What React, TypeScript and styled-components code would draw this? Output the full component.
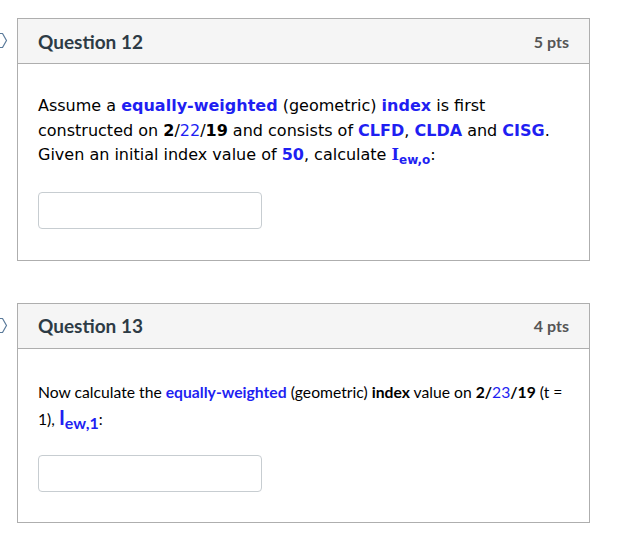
import styled, { createGlobalStyle } from 'styled-components'

const GlobalStyle = createGlobalStyle`
  body {
    margin: 0;
    background: #ffffff;
    font-family: Lato, "Noto Sans", sans-serif;
  }
`

const Page = styled.div`
  display: flex;
  flex-direction: column;
  gap: 42px;
  padding: 18px 0 24px 17px;
`

const QuestionWrap = styled.div`
  position: relative;
  width: 573px;
`

// the flag marker sits mostly off the left edge, only its tip shows
const Flag = styled.svg`
  position: absolute;
  left: -34px;
  top: 14px;
`

const Card = styled.div`
  border: 1px solid #aeaeae;
  background: #ffffff;
`

const Header = styled.div`
  display: flex;
  align-items: center;
  justify-content: space-between;
  height: 44px;
  padding: 0 20px;
  background: #f5f5f5;
  border-bottom: 1px solid #aeaeae;
`

const Title = styled.div`
  font-family: Lato, sans-serif;
  font-weight: 700;
  font-size: 19px;
  color: #2d3b45;
`

const Points = styled.div`
  font-family: Lato, sans-serif;
  font-weight: 700;
  font-size: 16px;
  color: #555555;
`

const Body = styled.div<{ $top: number; $bottom: number }>`
  padding: ${(p) => p.$top}px 20px ${(p) => p.$bottom}px 20px;
`

const Text = styled.div<{ $verdana?: boolean }>`
  font-family: ${(p) => (p.$verdana ? '"DejaVu Sans", Verdana, sans-serif' : 'Lato, sans-serif')};
  font-size: ${(p) => (p.$verdana ? '16px' : '15.7px')};
  line-height: ${(p) => (p.$verdana ? '24.5px' : '22px')};
  color: #000000;
`

const Gap = styled.div<{ $h: number }>`
  height: ${(p) => p.$h}px;
`

const Hi = styled.strong<{ $blue?: boolean }>`
  font-weight: 700;
  color: ${(p) => (p.$blue ? '#1f1ff2' : '#000000')};
`

const Blue = styled.span`
  color: #1f1ff2;
`

const SerifI = styled.strong`
  font-family: "DejaVu Serif", serif;
  font-size: 16px;
  color: #1f1ff2;
  font-weight: 700;
`

const LatoI = styled.span`
  font-family: Lato, sans-serif;
  font-weight: 700;
  font-size: 20px;
  line-height: 0;
  color: #1f1ff2;
`

const Sub = styled.sub<{ $size: number }>`
  font-size: ${(p) => p.$size}px;
  font-weight: 700;
  color: #1f1ff2;
  line-height: 0;
`

const SecondLine = styled.span`
  display: inline-block;
  margin-top: 5px;
`

const Answer = styled.input`
  display: block;
  box-sizing: border-box;
  width: 224px;
  height: 37px;
  border: 1px solid #c7cdd1;
  border-radius: 4px;
  background: #ffffff;
  outline: none;
`

function FlagIcon() {
  return (
    <Flag width="26" height="18" viewBox="0 0 26 18">
      <path
        d="M4 1.5 H19.5 L23.5 8.5 L19.5 15.5 H4"
        fill="none"
        stroke="#5a7a9a"
        strokeWidth="1.2"
        strokeLinejoin="round"
      />
    </Flag>
  )
}

export default function App() {
  return (
    <>
      <GlobalStyle />
      <Page>
        <QuestionWrap>
          <FlagIcon />
          <Card>
            <Header>
              <Title>Question 12</Title>
              <Points>5 pts</Points>
            </Header>
            <Body $top={30} $bottom={31}>
              <Text $verdana>
                Assume a <Hi $blue>equally-weighted</Hi> (geometric) <Hi $blue>index</Hi> is first
                <br />
                constructed on <Hi>2</Hi>/<Blue>22</Blue>/<Hi>19</Hi> and consists of{' '}
                <Hi $blue>CLFD</Hi>, <Hi $blue>CLDA</Hi> and <Hi $blue>CISG</Hi>.
                <br />
                Given an initial index value of <Hi $blue>50</Hi>, calculate <SerifI>I</SerifI>
                <Sub $size={12}>ew,o</Sub>:
              </Text>
              <Gap $h={24} />
              <Answer type="text" />
            </Body>
          </Card>
        </QuestionWrap>

        <QuestionWrap>
          <FlagIcon />
          <Card>
            <Header>
              <Title>Question 13</Title>
              <Points>4 pts</Points>
            </Header>
            <Body $top={32} $bottom={30}>
              <Text>
                Now calculate the <Hi $blue>equally-weighted</Hi> (geometric) <Hi>index</Hi> value on{' '}
                <Hi>2/</Hi>
                <Blue>23</Blue>
                <Hi>/19</Hi> (t =
                <br />
                <SecondLine>1),</SecondLine> <LatoI>I</LatoI>
                <Sub $size={16}>ew,1</Sub>:
              </Text>
              <Gap $h={25} />
              <Answer type="text" />
            </Body>
          </Card>
        </QuestionWrap>
      </Page>
    </>
  )
}
